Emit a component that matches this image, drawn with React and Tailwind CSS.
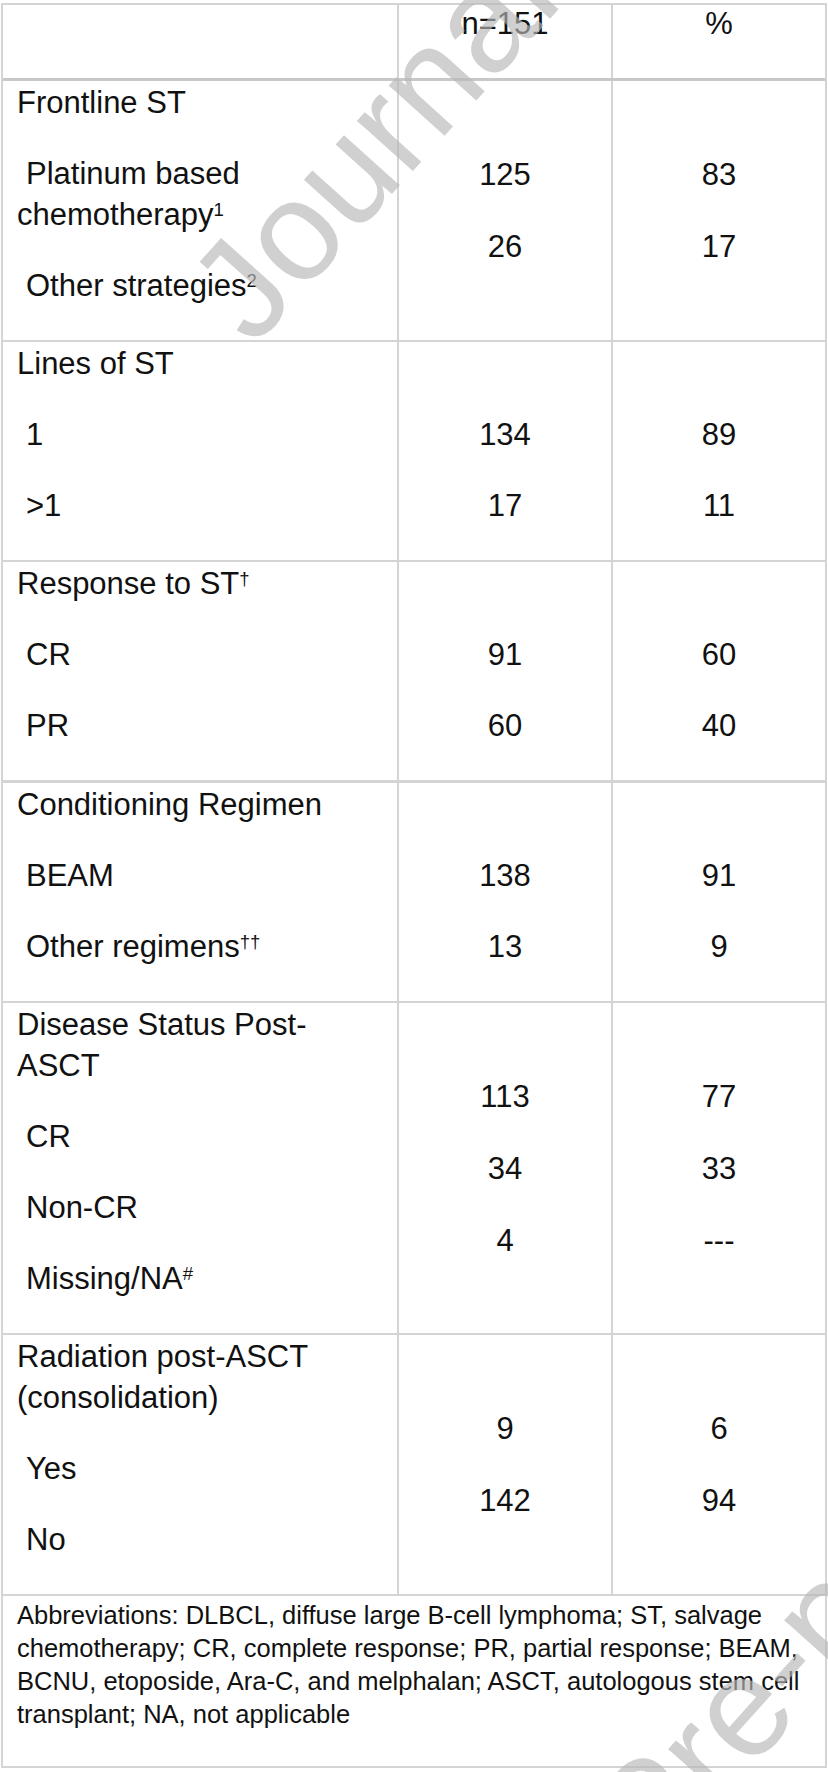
import React from 'react';

const line = 'border-[#d4d4d4]';

const P = ({ children, sub }) => (
    <p className={`leading-[41px] mb-[30px] ${sub ? 'indent-[9px]' : ''}`}>{children}</p>
);

const Sup = ({ children }) => <sup className="text-[60%]">{children}</sup>;

// numbers either follow the label lines (blank first line) or sit in the middle of the row
const Nums = ({ vals, centered, className = '' }) =>
    centered ? (
        <div className={`flex flex-col justify-center gap-[31px] text-center leading-[41px] ${className}`}>
            {vals.map((v, i) => <div key={i}>{v}</div>)}
        </div>
    ) : (
        <div className={`pt-px pb-1 text-center ${className}`}>
            <P>&nbsp;</P>
            {vals.map((v, i) => <P key={i}>{v}</P>)}
        </div>
    );

const Row = ({ label, n, pct, centered, bottom = 'border-b-2' }) => (
    <div className={`grid grid-cols-[396px_214px_212px] ${bottom} ${line}`}>
        <div className={`border-r-2 ${line} pl-[14px] pt-px pb-1`}>{label}</div>
        <Nums vals={n} centered={centered} className={`border-r-2 ${line}`} />
        <Nums vals={pct} centered={centered} />
    </div>
);

const App = () => {
    return (
        <div className="relative w-[828px] h-[1772px] overflow-hidden bg-white text-[#111] font-['Liberation_Sans',Arial,sans-serif] text-[31px]">
            <div className={`ml-px mt-[3px] w-[826px] border-x-2 border-t-2 ${line}`}>

                {/* Header */}
                <div className="grid grid-cols-[396px_214px_212px] border-b-[3px] border-[#c8c8c8]">
                    <div className={`h-[73px] border-r-2 ${line}`} />
                    <div className={`h-[73px] border-r-2 ${line} text-center leading-[38px]`}>n=151</div>
                    <div className="h-[73px] text-center leading-[38px]">%</div>
                </div>

                <Row
                    centered
                    label={<>
                        <P>Frontline ST</P>
                        <P sub>Platinum based<br />chemotherapy<Sup>1</Sup></P>
                        <P sub>Other strategies<Sup>2</Sup></P>
                    </>}
                    n={['125', '26']}
                    pct={['83', '17']}
                />

                <Row
                    label={<>
                        <P>Lines of ST</P>
                        <P sub>1</P>
                        <P sub>&gt;1</P>
                    </>}
                    n={['134', '17']}
                    pct={['89', '11']}
                />

                <Row
                    bottom="border-b-[3px]"
                    label={<>
                        <P>Response to ST<Sup>†</Sup></P>
                        <P sub>CR</P>
                        <P sub>PR</P>
                    </>}
                    n={['91', '60']}
                    pct={['60', '40']}
                />

                <Row
                    label={<>
                        <P>Conditioning Regimen</P>
                        <P sub>BEAM</P>
                        <P sub>Other regimens<Sup>††</Sup></P>
                    </>}
                    n={['138', '13']}
                    pct={['91', '9']}
                />

                <Row
                    centered
                    label={<>
                        <P>Disease Status Post-<br />ASCT</P>
                        <P sub>CR</P>
                        <P sub>Non-CR</P>
                        <P sub>Missing/NA<Sup>#</Sup></P>
                    </>}
                    n={['113', '34', '4']}
                    pct={['77', '33', '---']}
                />

                <Row
                    centered
                    label={<>
                        <P>Radiation post-ASCT<br />(consolidation)</P>
                        <P sub>Yes</P>
                        <P sub>No</P>
                    </>}
                    n={['9', '142']}
                    pct={['6', '94']}
                />

                {/* Footnote */}
                <div className={`border-b-2 ${line} pl-[14px] pt-[3px] pb-[35px] text-[25.5px] leading-[33px]`}>
                    Abbreviations: DLBCL, diffuse large B-cell lymphoma; ST, salvage<br />
                    chemotherapy; CR, complete response; PR, partial response; BEAM,<br />
                    BCNU, etoposide, Ara-C, and melphalan; ASCT, autologous stem cell<br />
                    transplant; NA, not applicable
                </div>
            </div>

            {/* Watermarks */}
            <div className="pointer-events-none absolute left-[164px] top-[268px] origin-top-left -rotate-[48deg] whitespace-nowrap text-[142px] leading-none text-[#b8b8b8] opacity-65">
                Journal Pre-proof
            </div>
            <div className="pointer-events-none absolute left-[227px] top-[2172px] origin-top-left -rotate-[48deg] whitespace-nowrap text-[142px] leading-none text-[#b8b8b8] opacity-65">
                Journal Pre-proof
            </div>
        </div>
    );
};

export default App;
